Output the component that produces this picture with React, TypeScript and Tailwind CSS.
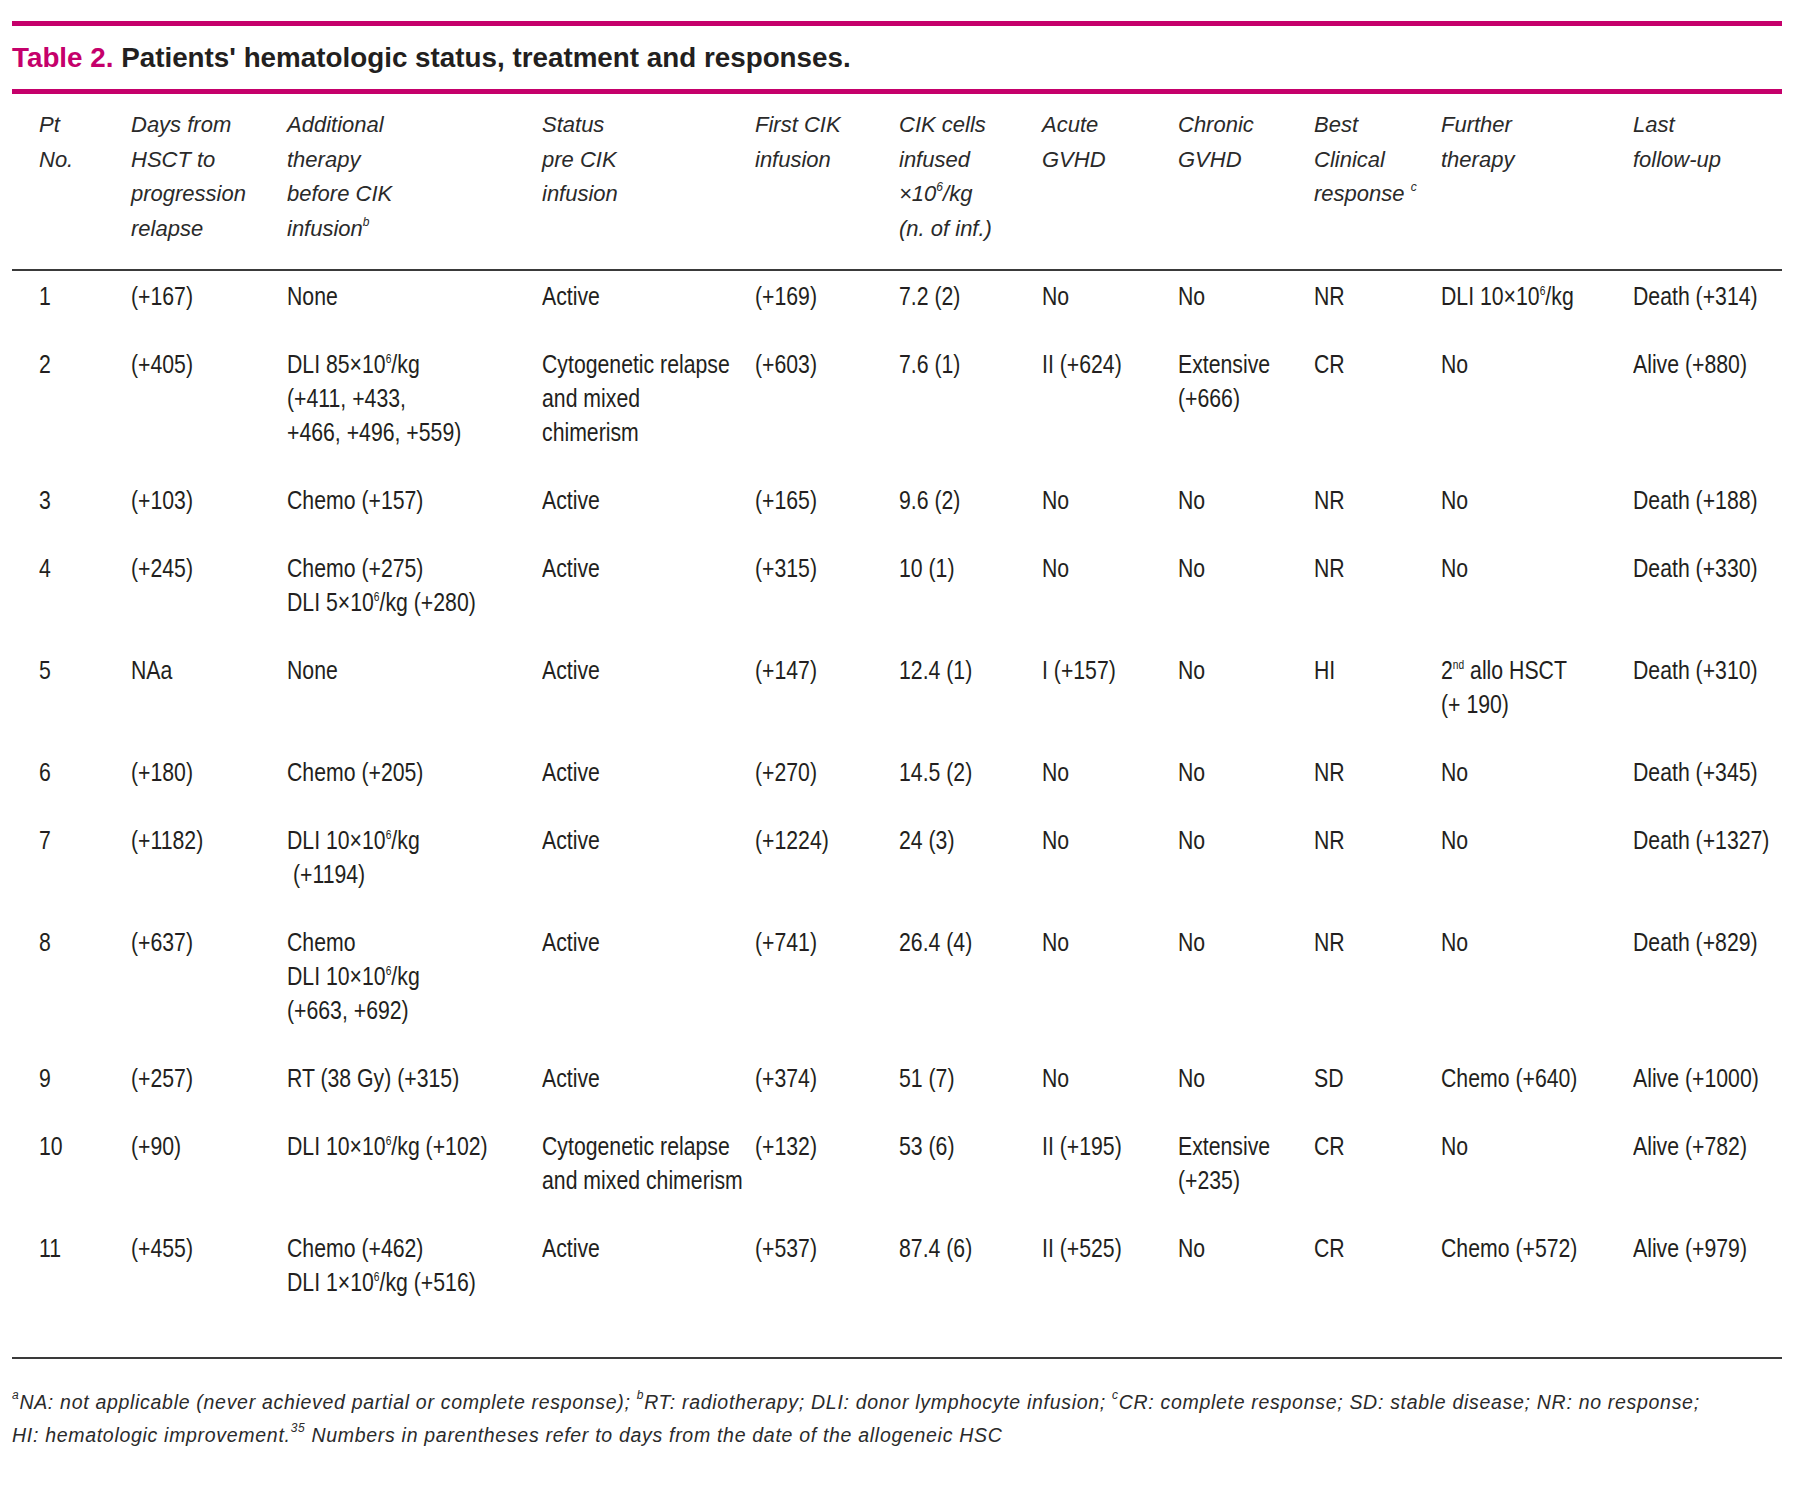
import React from 'react';

type Cell = React.ReactNode | React.ReactNode[];

// superscript that keeps the line box intact
const Sup: React.FC<{ children: React.ReactNode }> = ({ children }) => (
  <sup className="static text-[12px] leading-none align-[10px]">{children}</sup>
);

const e6 = (
  <>
    10<Sup>6</Sup>
  </>
);

const cols = 'grid grid-cols-[92px_156px_255px_213px_144px_143px_136px_136px_127px_192px_1fr] pl-[27px]';

const headers: Cell[] = [
  ['Pt', 'No.'],
  ['Days from', 'HSCT to', 'progression', 'relapse'],
  ['Additional', 'therapy', 'before CIK', <>infusion<Sup>b</Sup></>],
  ['Status', 'pre CIK', 'infusion'],
  ['First CIK', 'infusion'],
  ['CIK cells', 'infused', <>×{e6}/kg</>, '(n. of inf.)'],
  ['Acute', 'GVHD'],
  ['Chronic', 'GVHD'],
  ['Best', 'Clinical', <>response <Sup>c</Sup></>],
  ['Further', 'therapy'],
  ['Last', 'follow-up'],
];

const rows: Cell[][] = [
  ['1', '(+167)', 'None', 'Active', '(+169)', '7.2 (2)', 'No', 'No', 'NR', <>DLI 10×{e6}/kg</>, 'Death (+314)'],
  [
    '2',
    '(+405)',
    [<>DLI 85×{e6}/kg</>, '(+411, +433,', '+466, +496, +559)'],
    ['Cytogenetic relapse', 'and mixed', 'chimerism'],
    '(+603)',
    '7.6 (1)',
    'II (+624)',
    ['Extensive', '(+666)'],
    'CR',
    'No',
    'Alive (+880)',
  ],
  ['3', '(+103)', 'Chemo (+157)', 'Active', '(+165)', '9.6 (2)', 'No', 'No', 'NR', 'No', 'Death (+188)'],
  ['4', '(+245)', ['Chemo (+275)', <>DLI 5×{e6}/kg (+280)</>], 'Active', '(+315)', '10 (1)', 'No', 'No', 'NR', 'No', 'Death (+330)'],
  [
    '5',
    'NAa',
    'None',
    'Active',
    '(+147)',
    '12.4 (1)',
    'I (+157)',
    'No',
    'HI',
    [<>2<Sup>nd</Sup> allo HSCT</>, '(+ 190)'],
    'Death (+310)',
  ],
  ['6', '(+180)', 'Chemo (+205)', 'Active', '(+270)', '14.5 (2)', 'No', 'No', 'NR', 'No', 'Death (+345)'],
  ['7', '(+1182)', [<>DLI 10×{e6}/kg</>, '\u00a0(+1194)'], 'Active', '(+1224)', '24 (3)', 'No', 'No', 'NR', 'No', 'Death (+1327)'],
  ['8', '(+637)', ['Chemo', <>DLI 10×{e6}/kg</>, '(+663, +692)'], 'Active', '(+741)', '26.4 (4)', 'No', 'No', 'NR', 'No', 'Death (+829)'],
  ['9', '(+257)', 'RT (38 Gy) (+315)', 'Active', '(+374)', '51 (7)', 'No', 'No', 'SD', 'Chemo (+640)', 'Alive (+1000)'],
  [
    '10',
    '(+90)',
    <>DLI 10×{e6}/kg (+102)</>,
    ['Cytogenetic relapse', 'and mixed chimerism'],
    '(+132)',
    '53 (6)',
    'II (+195)',
    ['Extensive', '(+235)'],
    'CR',
    'No',
    'Alive (+782)',
  ],
  ['11', '(+455)', ['Chemo (+462)', <>DLI 1×{e6}/kg (+516)</>], 'Active', '(+537)', '87.4 (6)', 'II (+525)', 'No', 'CR', 'Chemo (+572)', 'Alive (+979)'],
];

const Lines: React.FC<{ cell: Cell; narrow?: boolean }> = ({ cell, narrow }) => {
  const lines = Array.isArray(cell) ? cell : [cell];
  return (
    <div className={narrow ? 'whitespace-nowrap scale-x-[0.85] origin-left' : 'whitespace-nowrap'}>
      {lines.map((l, i) => (
        <div key={i}>{l}</div>
      ))}
    </div>
  );
};

export default function App() {
  return (
    <div className="bg-white w-[1800px] min-h-[1487px] pt-[21px] text-[#231f20] font-[family-name:'Liberation_Sans',Arial,sans-serif]">
      <div className="ml-[12px] w-[1770px]">
        <div className="h-[5px] bg-[#c5006b]" />
        <h2 className="mt-[15px] h-[34px] text-[27.8px] leading-[34px] font-bold">
          <span className="text-[#c5006b]">Table 2.</span> Patients' hematologic status, treatment and responses.
        </h2>
        <div className="mt-[14px] h-[5px] bg-[#c5006b]" />

        <div className="pt-[14px] pb-[23px] border-b-2 border-[#3a3a3a]">
          <div className={`${cols} italic text-[22px] leading-[34.5px] text-[#2a2a2a]`}>
            {headers.map((h, i) => (
              <Lines key={i} cell={h} />
            ))}
          </div>
        </div>

        <div className="pt-[8px] pb-[24px] border-b-2 border-[#3a3a3a] text-[25px] leading-[34px]">
          {rows.map((r, i) => (
            <div key={i} className={`${cols} pb-[34px]`}>
              {r.map((c, j) => (
                <Lines key={j} cell={c} narrow />
              ))}
            </div>
          ))}
        </div>

        <div className="mt-[27px] italic text-[19.5px] leading-[33px] tracking-[0.7px] text-[#2a2a2a]">
          <p>
            <Sup>a</Sup>NA: not applicable (never achieved partial or complete response); <Sup>b</Sup>RT: radiotherapy; DLI:
            donor lymphocyte infusion; <Sup>c</Sup>CR: complete response; SD: stable disease; NR: no response;
          </p>
          <p>
            HI: hematologic improvement.<Sup>35</Sup> Numbers in parentheses refer to days from the date of the allogeneic HSC
          </p>
        </div>
      </div>
    </div>
  );
}
